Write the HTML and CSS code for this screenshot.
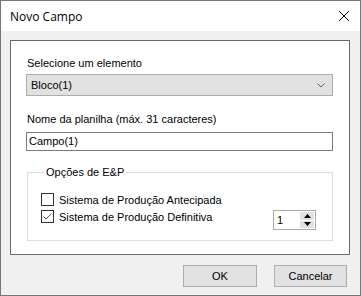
FILE: index.html
```html
<!DOCTYPE html>
<html>
<head>
<meta charset="utf-8">
<link rel="stylesheet" href="styles.css">
</head>
<body>
<div class="window">
  <div class="titlebar">
    <span class="title">Novo Campo</span>
    <svg class="close" width="12" height="12" viewBox="0 0 12 12"><path d="M1 1L11 11M11 1L1 11" stroke="#000" stroke-width="1"/></svg>
  </div>
  <div class="body">
    <div class="panel">
      <div class="label">Selecione um elemento</div>
      <div class="combo"><span>Bloco(1)</span>
        <svg class="chev" width="8" height="5" viewBox="0 0 8 5"><path d="M0.5 0.5L4 4L7.5 0.5" stroke="#606060" fill="none"/></svg>
      </div>
      <div class="label label2">Nome da planilha (máx. 31 caracteres)</div>
      <div class="textbox">Campo(1)</div>
      <fieldset class="group">
        <legend>Opções de E&amp;P</legend>
        <div class="row">
          <span class="check"></span><span class="txt">Sistema de Produção Antecipada</span>
        </div>
        <div class="row">
          <span class="check"><svg width="11" height="11" viewBox="0 0 11 11"><path d="M1.5 5.5L4 8L9.5 2.5" stroke="#555" fill="none"/></svg></span><span class="txt grow">Sistema de Produção Definitiva</span>
          <div class="spin"><span class="val">1</span>
            <div class="arrows">
              <div class="arr"><svg width="7" height="4" viewBox="0 0 7 4"><path d="M3.5 0L7 4H0Z" fill="#000"/></svg></div>
              <div class="arr"><svg width="7" height="4" viewBox="0 0 7 4"><path d="M0 0H7L3.5 4Z" fill="#000"/></svg></div>
            </div>
          </div>
        </div>
      </fieldset>
    </div>
    <div class="footer">
      <button class="btn">OK</button>
      <button class="btn">Cancelar</button>
    </div>
  </div>
</div>
</body>
</html>
```

FILE: styles.css
```css
* { box-sizing: border-box; }
html, body { margin: 0; padding: 0; }
body { width: 361px; height: 296px; font-family: "Liberation Sans", Arial, sans-serif; font-size: 11px; color: #000; }
.window { width: 361px; height: 296px; border: 1px solid #777; display: flex; flex-direction: column; background: #f0f0f0; }
.titlebar { height: 30px; background: #fff; display: flex; align-items: center; justify-content: space-between; padding: 0 9px 0 9px; }
.title { font-family: "Open Sans", "Noto Sans", sans-serif; font-size: 12px; color: #000; }
.close { margin-right: 1px; }
.body { flex: 1; padding: 9px 10px 0 9px; display: flex; flex-direction: column; }
.panel { height: 215px; background: #fff; border: 1px solid #696969; padding: 15px 16px 0 15px; }
.label { height: 14px; line-height: 14px; padding-left: 1px; }
.combo { margin-top: 4px; height: 22px; background: #e1e1e1; border: 1px solid #adadad; display: flex; align-items: center; justify-content: space-between; padding: 0 7px 0 4px; }
.label2 { margin-top: 16px; }
.textbox { margin-top: 6px; height: 19px; border: 1px solid #7a7a7a; line-height: 17px; padding-left: 2px; }
.group { margin: 14px 0 0 1px; padding: 14px 10px 0 13px; border: 1px solid #dcdcdc; height: 76px; }
.group legend { padding: 0 2px; margin-left: 3px; line-height: 14px; }
.row { display: flex; align-items: flex-start; height: 17px; }
.txt { line-height: 14px; }
.check { width: 13px; height: 13px; border: 1px solid #333; margin-right: 5px; display: flex; align-items: center; justify-content: center; background: #fff; }
.row .check svg { display: block; }
.grow { flex: 1; }
.spin { width: 43px; height: 20px; margin-top: 0; border: 1px solid #aaa; display: flex; margin-right: 6px; background: #fff; }
.val { flex: 1; padding-left: 3px; line-height: 18px; }
.arrows { width: 16px; display: flex; flex-direction: column; padding: 1px; gap: 1px; }
.arr { flex: 1; background: #e1e1e1; display: flex; align-items: center; justify-content: center; }
.footer { display: flex; justify-content: flex-end; gap: 17px; padding: 10px 3px 0 0; }
.btn { width: 73px; height: 22px; background: #e1e1e1; border: 1px solid #adadad; font-family: "Liberation Sans", Arial, sans-serif; font-size: 11px; color: #000; padding: 0; }
.btn:first-child { width: 74px; }
```
